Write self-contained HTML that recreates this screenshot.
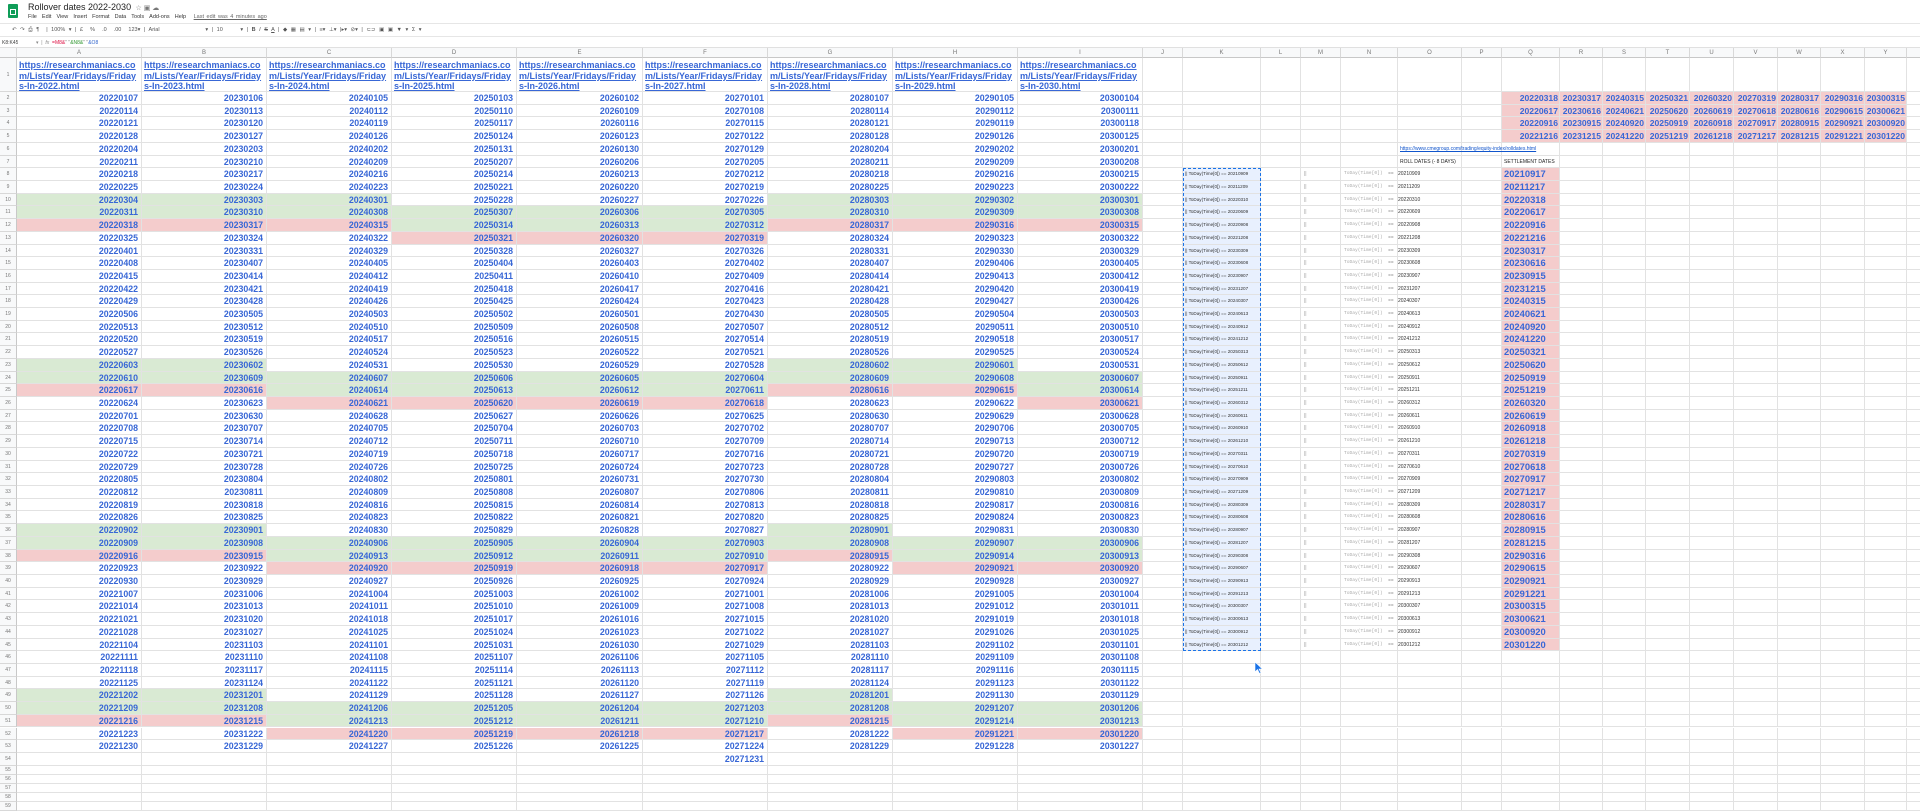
<!DOCTYPE html>
<html><head><meta charset="utf-8">
<style>
body{margin:0;width:1920px;height:791px;overflow:hidden;background:#fff;font-family:"Liberation Sans",Arial,sans-serif;position:relative}
.a{position:absolute;box-sizing:border-box;white-space:nowrap;overflow:hidden}
.ch{background:#f8f9fa;color:#777;font-size:6px;text-align:center;line-height:10px;border-right:1px solid #d8d8d8;border-bottom:1px solid #c8c8c8}
.rh{background:#f8f9fa;color:#777;font-size:5px;text-align:center;border-bottom:1px solid #d8d8d8;border-right:1px solid #c8c8c8}
.c{border-right:1px solid #e2e2e2;border-bottom:1px solid #e2e2e2}
.d{color:#3867d6;font-weight:bold;font-size:8.8px;text-align:right;padding-right:3px}
.u{color:#3867d6;font-weight:bold;font-size:9px;line-height:11px;text-decoration:underline;white-space:nowrap;padding:2px 0 0 2px;overflow:hidden}
.g{background:#d9ead3}.r{background:#f4cccc}
.sm{font-size:5px;color:#333}
</style></head><body>
<div class="a" style="left:8px;top:4px;width:10px;height:14px;background:#0f9d58;border-radius:1px"></div>
<div class="a" style="left:10px;top:9px;width:6px;height:6px;border:1px solid #fff;background:#0f9d58"></div>
<div class="a" style="left:28px;top:2px;font-size:9px;color:#222;line-height:11px">Rollover dates 2022-2030 <span style="color:#777;font-size:7px">&nbsp;☆ ▣ ☁</span></div>
<div class="a" style="left:28px;top:13px;font-size:5.5px;color:#333;line-height:8px;word-spacing:1px">File &nbsp;Edit &nbsp;View &nbsp;Insert &nbsp;Format &nbsp;Data &nbsp;Tools &nbsp;Add-ons &nbsp;Help &nbsp;&nbsp;<span style="color:#666;text-decoration:underline">Last edit was 4 minutes ago</span></div>
<div class="a" style="left:0;top:23px;width:1920px;height:14px;border-top:1px solid #e6e6e6;border-bottom:1px solid #e6e6e6"></div>
<div class="a" style="left:12px;top:26px;font-size:5.5px;color:#555;line-height:8px;word-spacing:2px">↶ ↷ ⎙ ¶ &nbsp;| 100% ▾ | £ &nbsp;% &nbsp;.0 &nbsp;.00 &nbsp;123▾ | Arial &nbsp; &nbsp; &nbsp; &nbsp; &nbsp; &nbsp; ▾ | 10 &nbsp; &nbsp; ▾ | <b>B</b> <i>I</i> <s>S</s> <u>A</u> | ◆ ▦ ▤ ▾ | ≡▾ ⊥▾ |▸▾ ⊘▾ | ⊂⊃ ▣ ▣ ▼ ▾ Σ ▾</div>
<div class="a" style="left:2px;top:39px;font-size:5px;color:#444;line-height:8px">K8:K45</div>
<div class="a" style="left:36px;top:39px;font-size:5px;color:#888;line-height:8px">▾ &nbsp;| &nbsp;<i>fx</i> &nbsp;<span style="color:#d14">=M8&amp;</span>" "<span style="color:#393">&amp;N8&amp;</span>" "<span style="color:#36c">&amp;O8</span></div>
<div class="a" style="left:0;top:47px;width:1920px;height:1px;background:#e0e0e0"></div>
<div id="g"></div>
<svg class="a" style="left:1254px;top:662px;overflow:visible" width="10" height="12"><path d="M1 0 L1 10 L3.5 7.5 L5.5 11.5 L7 10.8 L5 7 L8.5 7 Z" fill="#1a73e8" stroke="#fff" stroke-width="0.6"/></svg>
<script>
var X=[0,17,142,267,392,517,643,768,893,1018,1143,1183,1261,1301,1341,1398,1462,1502,1560,1603,1646,1690,1734,1778,1821,1865,1907,1950];
var L="ABCDEFGHIJKLMNOPQRSTUVWXYZ".split("");
var rowsY=[48,58,92];var y=92;for(var i=2;i<=54;i++){y+=12.71;rowsY.push(y);}for(i=0;i<5;i++){y+=9;rowsY.push(y);}
var h="";
function box(x,yy,w,hh,cls,txt,st){h+='<div class="a '+cls+'" style="left:'+x+'px;top:'+yy+'px;width:'+w+'px;height:'+hh+'px;line-height:'+hh+'px;'+(st||'')+'">'+(txt||'')+'</div>';}
box(0,48,17,10,"ch","");
for(var c=1;c<X.length-1;c++)box(X[c],48,X[c+1]-X[c],10,"ch",L[c-1]);
for(var r=1;r<rowsY.length-1;r++){var t=rowsY[r],b=rowsY[r+1];box(0,t,17,b-t,"rh",r);
 for(c=1;c<X.length-1;c++)box(X[c],t,X[c+1]-X[c],b-t,"c","");}
function RY(r){return rowsY[r];}function RH(r){return rowsY[r+1]-rowsY[r];}
function fmt(d){var m=d.getUTCMonth()+1,dd=d.getUTCDate();return ""+d.getUTCFullYear()+(m<10?"0":"")+m+(dd<10?"0":"")+dd;}
function cls(d){var m=d.getUTCMonth()+1,dd=d.getUTCDate();if(m%3)return "";if(dd>=15&&dd<=21)return " r";if(dd<=14)return " g";return "";}
for(var yr=2022;yr<=2030;yr++){var col=yr-2021;var x=X[col],w=X[col+1]-x;
 var u="https://researchmaniacs.co<br>m/Lists/Year/Fridays/Friday<br>s-In-"+yr+".html";
 box(x,RY(1),w,RH(1),"u",u,"line-height:10.5px");
 var d=new Date(Date.UTC(yr,0,1));while(d.getUTCDay()!=5)d=new Date(d.getTime()+864e5);
 var r=2;while(d.getUTCFullYear()==yr){box(x,RY(r),w,RH(r),"d c"+cls(d),fmt(d));d=new Date(d.getTime()+7*864e5);r++;}
}
var settle=[new Date(Date.UTC(2021,8,17)),new Date(Date.UTC(2021,11,17))];
for(yr=2022;yr<=2030;yr++){for(var q=0;q<4;q++){var dd=new Date(Date.UTC(yr,q*3+2,15));while(dd.getUTCDay()!=5)dd=new Date(dd.getTime()+864e5);settle.push(dd);
 var cc=17+(yr-2022);box(X[cc],RY(2+q),X[cc+1]-X[cc],RH(2+q),"d c r",fmt(dd),"padding-right:1px;font-size:8.6px");}}
box(X[15],RY(6),300,RH(6),"","https://www.cmegroup.com/trading/equity-index/rolldates.html","font-size:5px;color:#1155cc;text-decoration:underline;padding-left:2px;overflow:visible");
box(X[15],RY(7),120,RH(7),"","ROLL DATES (- 8 DAYS)","font-size:5px;color:#222;padding-left:2px");
box(X[17],RY(7),60,RH(7),"","SETTLEMENT DATES","font-size:5px;color:#222;padding-left:2px");
for(i=0;i<settle.length;i++){r=8+i;var s=settle[i],ro=fmt(new Date(s.getTime()-8*864e5));
 box(X[11],RY(r),X[12]-X[11],RH(r),"c","|| ToDay(Time[0]) == "+ro,"font-size:4.6px;color:#333;background:#e8f0fe;padding-left:2px");
 box(X[13],RY(r),40,RH(r),"","||","font-size:5px;color:#999;padding-left:3px");
 box(X[14],RY(r),57,RH(r),"",'ToDay(Time[0]) &nbsp;<span style="color:#333">==</span>',"font-family:'Liberation Mono',monospace;font-size:4.6px;color:#aaa;padding-left:3px");
 box(X[15],RY(r),64,RH(r),"sm",ro,"");
 box(X[17],RY(r),X[18]-X[17],RH(r),"d c r",fmt(s),"text-align:left;padding-left:2px;font-size:9.4px");}
box(X[11],RY(8),X[12]-X[11],RY(46)-RY(8),"","","border:1px dashed #1a73e8");
document.getElementById("g").innerHTML=h;
</script>
</body></html>
